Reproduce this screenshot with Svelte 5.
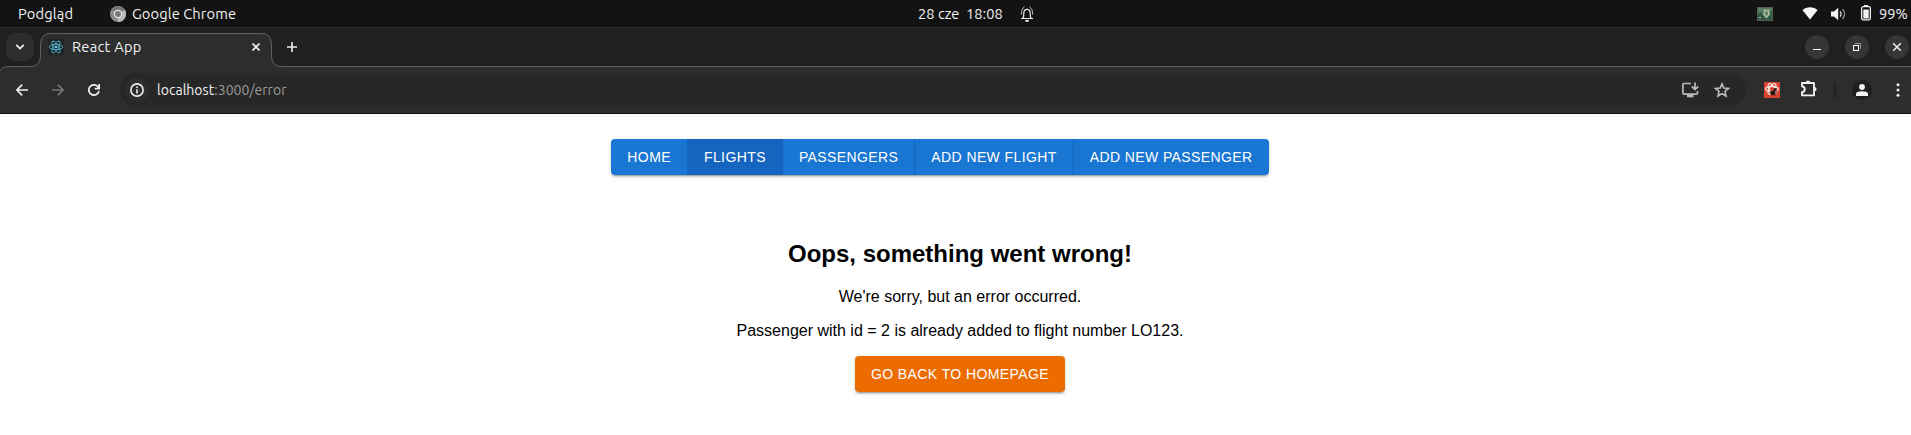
<script>
  const nav = ['Home', 'Flights', 'Passengers', 'Add new flight', 'Add new passenger'];
  const active = 'Flights';
</script>

<div class="screen">
  <header class="panel">
    <span class="t podglad">Podgląd</span>
    <svg class="chrome" width="16" height="16" viewBox="0 0 16 16">
      <circle cx="8" cy="8" r="8" fill="#8b8b8b" />
      <path d="M8 8 15 4A8 8 0 0 1 8 16Z" fill="#b9b9b9" />
      <path d="M1 4A8 8 0 0 1 15 4L8 4.5Z" fill="#777" />
      <circle cx="8" cy="8" r="4.2" fill="#e6e6e6" />
      <circle cx="8" cy="8" r="3" fill="#777" />
    </svg>
    <span class="t gchrome">Google Chrome</span>
    <span class="t date">28 cze</span>
    <span class="t time">18:08</span>
    <svg class="bell" width="14" height="16" viewBox="0 0 14 16" fill="none" stroke="#eee">
      <path d="M1 12.500h12M3 12.300c.8-1.200.8-2.800.8-5 0-2.500 1.200-4 3.200-4s3.200 1.500 3.200 4c0 2.200 0 3.800.8 5" stroke-width="1.200" />
      <path d="M1.500 8.500C1.300 4.500 2.200 2.300 4.500.8M12.500 8.500c.2-4-.7-6.200-3-7.700" stroke="#bbb" stroke-width="1" />
      <path d="M5 14h4a2 2 0 0 1-4 0Z" fill="#eee" stroke="none" />
    </svg>
    <svg class="tray" width="16" height="14" viewBox="0 0 16 14">
      <rect width="16" height="14" fill="#555b57" />
      <rect x="1" y="1" width="14" height="12" fill="#2f5941" />
      <path d="M1 1h14v3L1 6Z" fill="#557d64" />
      <path d="M6.500 2.800h6v3.700h1.500L9.500 11.500 5 6.500h1.500Z" fill="#a9bb98" />
      <path d="M8 4.300h3v3.200L9.500 9 8 7.500Z" fill="#65856a" />
      <path d="M2 10h2v1H2Z" fill="#a8c0a8" />
    </svg>
    <svg class="wifi" width="16" height="13" viewBox="0 0 16 13"><path d="M.5 3.200C4.500-.6 11.500-.6 15.500 3.200L8 12.500Z" fill="#f5f5f5" /></svg>
    <svg class="vol" width="16" height="14" viewBox="0 0 16 14" fill="none">
      <path d="M0 4.500h3L7.200.8v12.400L3 9.500H0Z" fill="#f2f2f2" />
      <path d="M9 4.500c1.300 1.300 1.300 3.700 0 5" stroke="#eee" stroke-width="1.300" />
      <path d="M11.500 2c2.700 2.800 2.700 7.200 0 10" stroke="#999" stroke-width="1.200" />
    </svg>
    <svg class="batt" width="10" height="16" viewBox="0 0 10 16">
      <path d="M3 0h4v2H3Z" fill="#f2f2f2" />
      <rect x=".65" y="1.650" width="8.700" height="13.200" rx="1.500" fill="none" stroke="#f2f2f2" stroke-width="1.300" />
      <rect x="2.300" y="4.500" width="5.400" height="9" fill="#f2f2f2" />
    </svg>
    <span class="t pct">99%</span>
  </header>

  <div class="tabs">
    <svg class="outline" width="1911" height="50" viewBox="0 0 1911 50">
      <rect width="1911" height="50" fill="#202020" />
      <path d="M-1 51V46Q0 38.500 9 38.500H30Q40.500 38.500 40.500 28V16Q40.500 5.500 51 5.500H261Q271.500 5.500 271.500 16V28Q271.500 38.500 282 38.500H1912V51Z" fill="#2d2d2d" stroke="#606060" />
    </svg>
    <button class="drop" aria-label="Search tabs">
      <svg width="10" height="6" viewBox="0 0 10 6" fill="none" stroke="#eee" stroke-width="1.800"><path d="M1.200.8 5 4.600 8.800.8" /></svg>
    </button>
    <div class="tab">
      <svg class="react" width="16" height="16" viewBox="0 0 16 16" fill="none" stroke="#55bfd8" stroke-width=".8">
        <rect width="16" height="16" rx="1" fill="#202326" stroke="none" />
        <ellipse cx="8" cy="8" rx="6.800" ry="2.600" />
        <ellipse cx="8" cy="8" rx="6.800" ry="2.600" transform="rotate(60 8 8)" />
        <ellipse cx="8" cy="8" rx="6.800" ry="2.600" transform="rotate(120 8 8)" />
        <circle cx="8" cy="8" r="1.300" fill="#61dafb" stroke="none" />
      </svg>
      <span class="t title">React App</span>
      <svg class="close" width="8" height="8" viewBox="0 0 8 8" stroke="#eee" stroke-width="1.700"><path d="M.5.5l7 7M7.500.5l-7 7" /></svg>
    </div>
    <svg class="plus" width="10" height="10" viewBox="0 0 10 10" stroke="#eee" stroke-width="1.600"><path d="M5 0v10M0 5h10" /></svg>
    <div class="win">
      <button aria-label="Minimize"><svg width="24" height="24" viewBox="0 0 24 24"><path d="M8 14h8v1H8Z" fill="#fff" /></svg></button>
      <button aria-label="Restore"><svg width="24" height="24" viewBox="0 0 24 24" fill="none"><rect x="8.500" y="10.500" width="5" height="5" stroke="#fff" /><path d="M10 8.500h5.500V14" stroke="#999" /></svg></button>
      <button aria-label="Close"><svg width="24" height="24" viewBox="0 0 24 24" stroke="#eee" stroke-width="1.500"><path d="M8.200 8.200l7.600 7.600M15.800 8.200l-7.600 7.600" /></svg></button>
    </div>
  </div>

  <div class="toolbar">
    <svg class="nav-i" width="12" height="12" viewBox="0 0 12 12" fill="none" stroke="#f0f0f0" stroke-width="1.700"><path d="M12 6H1.500M6.200.7.9 6l5.300 5.300" /></svg>
    <svg class="nav-i" width="12" height="12" viewBox="0 0 12 12" fill="none" stroke="#767676" stroke-width="1.700"><path d="M0 6h10.500M5.800.7 11.100 6l-5.300 5.300" /></svg>
    <svg class="nav-i" width="12" height="12" viewBox="0 0 12 12" fill="none" stroke="#f0f0f0" stroke-width="1.700"><path d="M11 7A5.150 5.150 0 1 1 9.800 2.500L11 4M11.200 0v4.600H6.700" /></svg>
    <div class="url">
      <span class="info"><svg width="14" height="14" viewBox="0 0 14 14" fill="none"><circle cx="7" cy="7" r="6.100" stroke="#f0f0f0" stroke-width="1.600" /><path d="M6.200 6.200h1.600v4.200H6.200ZM6.200 3.500h1.600v1.500H6.200Z" fill="#f0f0f0" /></svg></span>
      <span class="t addr"><b>localhost</b>:3000/error</span>
      <svg class="inst" width="17" height="16" viewBox="0 0 17 16" fill="none" stroke="#bcbcbc" stroke-width="1.700"><path d="M9 1.500H2.200Q.9 1.500.9 2.800V11Q.9 12.200 2.200 12.200H14Q15.500 12.200 15.500 11V9" /><path d="M5 12h6.500v3.300H5Z" fill="#bcbcbc" stroke="none" /><path d="M13 .5v7M9.800 4.300l3.200 3.200 3.200-3.200" /></svg>
      <svg class="star" width="16" height="16" viewBox="0 0 16 16" fill="none" stroke="#bcbcbc" stroke-width="1.600"><path d="M8 1.900 9.800 6l4.700.4-3.500 3 1 4.600L8 11.600 4 14l1-4.600-3.500-3L6.200 6Z" /></svg>
    </div>
    <svg class="ext" width="16" height="16" viewBox="0 0 16 16" fill="none">
      <rect width="16" height="16" fill="#d9432f" />
      <g stroke="#f6e6e2" stroke-width="1.200"><ellipse cx="8" cy="7" rx="6.300" ry="2.700" /><ellipse cx="8" cy="7" rx="6" ry="2.700" transform="rotate(60 8 7)" /><ellipse cx="8" cy="7" rx="6" ry="2.700" transform="rotate(120 8 7)" /></g>
      <ellipse cx="9" cy="11" rx="2.600" ry="2.300" fill="#2a1512" />
      <circle cx="11" cy="7.800" r="1.700" fill="#2a1512" />
      <path d="M6 9l2.500 2M6.500 13l2.500-2M12 9.500l1.200 1M11 12l.8 1.500" stroke="#2a1512" stroke-width=".8" />
    </svg>
    <svg class="puz" width="17" height="17" viewBox="0 0 17 17" fill="none" stroke="#f0f0f0" stroke-width="1.900" stroke-linejoin="round"><path d="M2 3H14V15.400H2V12.200Q4.800 11.700 4.800 9.200T2 6.200Z" /><path d="M5.900 2.600a2.100 2.100 0 0 1 4.200 0ZM14.500 7.100a2.100 2.100 0 0 1 0 4.200Z" fill="#f0f0f0" stroke="none" /></svg>
    <span class="sep"></span>
    <span class="avatar"><svg width="12" height="12" viewBox="0 0 12 12" fill="#f5f5f5"><circle cx="6" cy="3" r="2.900" /><path d="M0 12V10Q0 7.200 6 7.200T12 10V12Z" /></svg></span>
    <svg class="dots" width="4" height="14" viewBox="0 0 4 14" fill="#eee"><circle cx="2" cy="1.700" r="1.500" /><circle cx="2" cy="7" r="1.500" /><circle cx="2" cy="12.300" r="1.500" /></svg>
  </div>

  <main>
    <nav>
      {#each nav as item}
        <button class:active={item === active}>{item}</button>
      {/each}
    </nav>
    <h2>Oops, something went wrong!</h2>
    <p>We're sorry, but an error occurred.</p>
    <p>Passenger with id = 2 is already added to flight number LO123.</p>
    <button class="back">Go back to homepage</button>
  </main>
</div>

<style>
  :global(body) { margin: 0; background: #fff; }
  .screen { width: 1911px; height: 435px; overflow: hidden; font-family: "Liberation Sans", Arial, sans-serif; }
  button { border: 0; padding: 0; font: inherit; cursor: pointer; }
  svg { display: block; flex: none; }
  .t { font-family: Ubuntu, "Noto Sans", sans-serif; font-size: 14.667px; line-height: 20px; color: #f2f2f2; white-space: pre; flex: none; }

  .panel { box-sizing: border-box; height: 28px; display: flex; align-items: center; background: #131313; border-bottom: 1px solid #303030; }
  .podglad { width: 92px; padding-left: 18px; letter-spacing: .15px; }
  .gchrome { width: 786px; padding-left: 6px; letter-spacing: .1px; }
  .date { width: 48px; }
  .time { width: 54px; }
  .tray { margin-left: 723px; }
  .wifi { margin-left: 29px; }
  .vol { margin-left: 13px; }
  .batt { margin-left: 14px; margin-top: -2px; }
  .pct { margin-left: 8px; }

  .tabs { position: relative; height: 38px; display: flex; align-items: center; background: #202020; }
  .outline { position: absolute; left: 0; top: 0; }
  .drop { position: relative; width: 28px; height: 28px; margin-left: 6px; border-radius: 10px; background: #2d2d2d; display: grid; place-items: center; }
  .tab { position: relative; width: 231px; margin-left: 6px; display: flex; align-items: center; }
  .react { margin-left: 8px; }
  .title { margin-left: 8px; flex: 1; letter-spacing: .25px; }
  .close { margin-right: 11px; }
  .plus { position: relative; margin-left: 16px; }
  .win { position: relative; display: flex; gap: 16px; margin-left: auto; margin-right: 2px; }
  .win button { width: 24px; height: 24px; border-radius: 50%; background: #363636; }

  .toolbar { position: relative; box-sizing: border-box; height: 48px; border-bottom: 1px solid #111; display: flex; align-items: center; background: linear-gradient(#2d2d2d, #2d2d2d) 0 10px no-repeat; }
  .nav-i { margin-left: 24px; }
  .nav-i:first-child { margin-left: 16px; }
  .url { box-sizing: border-box; width: 1626px; height: 34px; margin-left: 20px; border-radius: 17px; background: #272727; display: flex; align-items: center; padding: 0 16px 0 5px; }
  .info { width: 24px; height: 24px; border-radius: 50%; background: #2e2e2e; display: grid; place-items: center; }
  .addr { margin-left: 8px; flex: 1; font-size: 14px; letter-spacing: .03px; color: #9a9a9a; }
  .addr b { font-weight: 400; color: #f2f2f2; }
  .star { margin-left: 15px; }
  .ext { margin-left: 18px; }
  .puz { margin-left: 20px; margin-top: -2px; }
  .sep { width: 2px; height: 16px; margin-left: 17px; background: #202020; }
  .avatar { width: 20px; height: 20px; margin-left: 16px; border-radius: 50%; background: #1e1e1e; display: grid; place-items: center; }
  .dots { margin-left: 24px; }

  main { width: 1920px; height: 321px; background: #fff; display: flex; flex-direction: column; align-items: center; color: #000; }
  nav, .back { border-radius: 4px; box-shadow: 0 3px 1px -2px rgba(0,0,0,.2), 0 2px 2px 0 rgba(0,0,0,.14), 0 1px 5px 0 rgba(0,0,0,.12); }
  nav { display: flex; margin: 25px 40px 65px 0; }
  nav button, .back { box-sizing: border-box; height: 36px; padding: 0 16px; font-size: 14px; line-height: 24.500px; letter-spacing: .02857em; text-transform: uppercase; color: #fff; }
  nav button { background: #1976d2; border-right: 1px solid #1565c0; }
  nav button:first-child { border-radius: 4px 0 0 4px; }
  nav button:last-child { border-right: 0; border-radius: 0 4px 4px 0; }
  nav button.active { background: #1565c0; }
  h2 { margin: 0 0 21px; font-size: 24px; line-height: 27px; }
  p { margin: 0 0 16px; font-size: 16px; line-height: 18px; }
  .back { background: #ed6c02; border-radius: 4px; }
</style>
